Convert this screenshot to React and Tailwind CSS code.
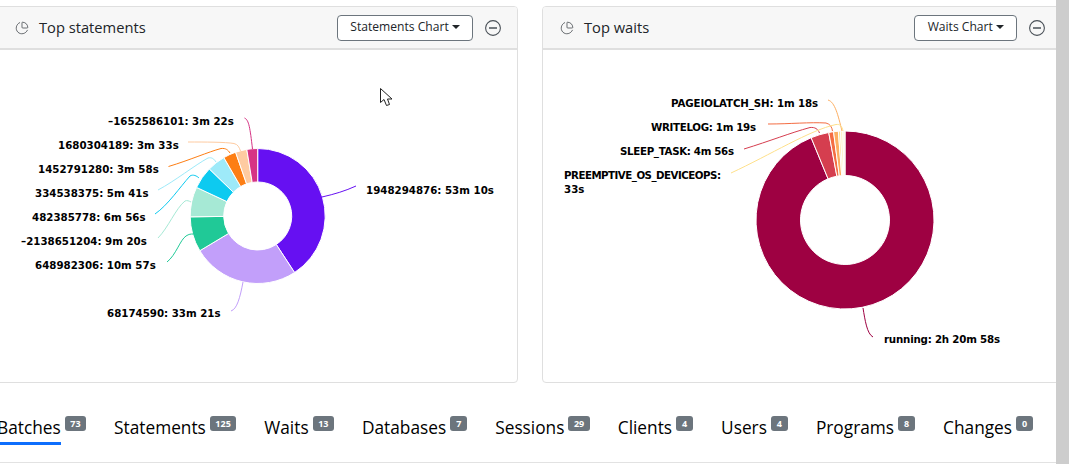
import React from "react";
import { ChartPie } from "lucide-react";

const arc = (cx, cy, R, r, a0, a1) => {
  const p = (rad, a) => {
    const t = ((a - 90) * Math.PI) / 180;
    return `${(cx + rad * Math.cos(t)).toFixed(2)} ${(cy + rad * Math.sin(t)).toFixed(2)}`;
  };
  const large = a1 - a0 > 180 ? 1 : 0;
  return `M${p(R, a0)}A${R} ${R} 0 ${large} 1 ${p(R, a1)}L${p(r, a1)}A${r} ${r} 0 ${large} 0 ${p(r, a0)}Z`;
};

const Donut = ({ cx, cy, R, r, slices }) => {
  const total = slices.reduce((s, x) => s + x[0], 0);
  let a = 0;
  return slices.map(([v, c], i) => {
    const a0 = a;
    a += (v / total) * 360;
    return <path key={i} d={arc(cx, cy, R, r, a0, a)} fill={c} stroke="#fff" strokeWidth="1" />;
  });
};

const s1 = [
  [3190, "#6610f2"], [2001, "#c29ffa"], [657, "#20c997"], [560, "#a6e9d5"], [416, "#0dcaf0"],
  [341, "#9eeaf9"], [238, "#fd7e14"], [213, "#fecba1"], [202, "#d63384"],
];
const s2 = [
  [8458, "#9e0142"], [296, "#d53e4f"], [79, "#f46d43"], [78, "#fdae61"], [33, "#fee08b"],
  [40, "#fff3c4"], [34, "#fbf8d8"],
];

const lines1 = [
  ["M244.5 118C249 120 250 128 252.5 149", "#d63384"],
  ["M188 142C205 142 225 142 234 143.500C238 144.500 239 147 240.500 151", "#fecba1"],
  ["M168.500 166.500C190 160 208 152 221 148.500C226 148 228 150 230 153", "#fd7e14"],
  ["M158 190C175 181 195 165 208 158C212 157 214 159 216 162", "#9eeaf9"],
  ["M155 214C168 205 180 187 190 176C193 174 197 176 199 178", "#0dcaf0"],
  ["M158 238C168 228 176 208 185 201C187 200 189 201 191 202", "#a6e9d5"],
  ["M167 262C176 255 180 240 186 236C189 234 191 234 193 234", "#20c997"],
  ["M231 311C237 309 240 298 243 282", "#c29ffa"],
  ["M322 197C335 194 345 191 356 186", "#6610f2"],
];
const lines2 = [
  ["M828 100C835 102 838 115 842 131", "#fdae61"],
  ["M768 124C790 124 810 122 826 123C830 124 832 127 832.500 131", "#f46d43"],
  ["M744 149C770 141 790 133 810 127.500C815 127 818 129 819.500 133", "#d53e4f"],
  ["M731 173C770 155 810 130 836 124.500C840 124 842 126 843 131", "#fee08b"],
  ["M863 308C865 320 867 334 873 337", "#9e0142"],
];
const labels1 = [
  [108, 125, "–1652586101: 3m 22s"], [58, 149, "1680304189: 3m 33s"], [38, 173, "1452791280: 3m 58s"],
  [35, 197, "334538375: 5m 41s"], [32, 221, "482385778: 6m 56s"], [21, 245, "–2138651204: 9m 20s"],
  [35, 269, "648982306: 10m 57s"], [107, 317, "68174590: 33m 21s"], [366, 194, "1948294876: 53m 10s"],
];
const labels2 = [
  [671, 107, "PAGEIOLATCH_SH: 1m 18s", 147], [651, 131, "WRITELOG: 1m 19s", 105], [620, 155, "SLEEP_TASK: 4m 56s", 114],
  [564, 179, "PREEMPTIVE_OS_DEVICEOPS:", 157], [564, 193, "33s"], [884, 343, "running: 2h 20m 58s", 116],
];

const Chart = ({ viewBox, children, lines, labels }) => (
  <svg className="block w-[540px] h-[333px]" viewBox={viewBox}>
    {children}
    {lines.map(([d, c], i) => (
      <path key={i} d={d} fill="none" stroke={c} strokeWidth="1" />
    ))}
    {labels.map(([x, y, t, w], i) => (
      <text key={i} x={x} y={y} textLength={w} lengthAdjust={w ? "spacing" : undefined} fontFamily="'DejaVu Sans', sans-serif" fontWeight="700" fontSize="10.25" fill="#000">
        {t}
      </text>
    ))}
  </svg>
);

const Card = ({ title, button, chart }) => (
  <div className="w-[540px] h-[377px] shrink-0 border border-[#dfdfdf] rounded-[4px] bg-white overflow-hidden">
    <div className="h-[43px] bg-[#f7f7f7] border-b-2 border-[#dfdfdf] flex items-center">{title}{button}</div>
    {chart}
  </div>
);

const Header = ({ title, left }) => (
  <>
    <ChartPie className={`${left} w-[14px] h-[14px] text-[#343a40] shrink-0`} strokeWidth={1.25} />
    <span className="ml-[10px] text-[14.7px] text-[#212529]">{title}</span>
  </>
);

const Btn = ({ label, className }) => (
  <div className={`h-[26px] border border-[#6c757d] rounded-[4px] bg-white flex items-center justify-center text-[12.1px] text-[#212529] ${className}`}>
    {label}
    <span className="ml-[3px] w-0 h-0 border-x-[4px] border-x-transparent border-t-[4px] border-t-[#212529] mb-[1px]" />
  </div>
);

const Minus = () => (
  <svg className="ml-[12px] w-[16px] h-[16px] shrink-0" viewBox="0 0 16 16" fill="none" stroke="#495057" strokeWidth="1.1">
    <circle cx="8" cy="8" r="7.400" />
    <path d="M4 8h8" strokeWidth="1.400" />
  </svg>
);

const tabs = [
  ["Batches", 73], ["Statements", 125], ["Waits", 13], ["Databases", 7], ["Sessions", 29],
  ["Clients", 4], ["Users", 4], ["Programs", 8], ["Changes", 0],
];

export default function App() {
  return (
    <div className="flex w-[1069px] h-[464px] overflow-hidden bg-white" style={{ fontFamily: "'Open Sans', sans-serif" }}>
      <div className="relative w-[1056px] h-[463px] overflow-hidden shrink-0 border-b border-[#e2e2e2]">
        <div className="flex gap-[24px] -ml-[22px] pt-[6px]">
          <Card
            title={<Header title="Top statements" left="ml-[36px]" />}
            button={<><Btn label="Statements Chart" className="ml-auto w-[136px]" /><Minus /><span className="w-[16px] shrink-0" /></>}
            chart={
              <Chart viewBox="-21 50 540 333" lines={lines1} labels={labels1}>
                <Donut cx={257.7} cy={216} R={67.5} r={34} slices={s1} />
              </Chart>
            }
          />
          <Card
            title={<Header title="Top waits" left="ml-[17px]" />}
            button={<><Btn label="Waits Chart" className="ml-[265px] w-[103px] shrink-0" /><Minus /></>}
            chart={
              <Chart viewBox="543 50 540 333" lines={lines2} labels={labels2}>
                <Donut cx={845} cy={220} R={89} r={44.500} slices={s2} />
              </Chart>
            }
          />
        </div>
        <div className="flex gap-[28px] -ml-[3px] mt-[32px] text-[17.3px] text-black">
          {tabs.map(([t, n], i) => (
            <div key={t} className="flex items-start gap-[4px] shrink-0">
              <span className={`pb-[1px] leading-[26px] border-b-[3px] ${i === 0 ? "border-[#0d6efd]" : "border-transparent"}`}>{t}</span>
              <span className="mt-[1px] h-[15px] min-w-[17px] px-[5.5px] rounded-[3px] bg-[#6c757d] text-white text-[9px] font-bold leading-[15px] text-center">{n}</span>
            </div>
          ))}
        </div>
        <svg className="absolute left-[379px] top-[87px] w-[14px] h-[21px]" viewBox="0 0 14 21">
          <path d="M1.500 1.500V15.500L5 12.500L7.500 18.500L10.500 17.500L8.500 12H13Z" fill="#fff" stroke="#222" strokeWidth="1" />
        </svg>
      </div>
      <div className="flex-1 bg-[#cdcdcd]" />
    </div>
  );
}
